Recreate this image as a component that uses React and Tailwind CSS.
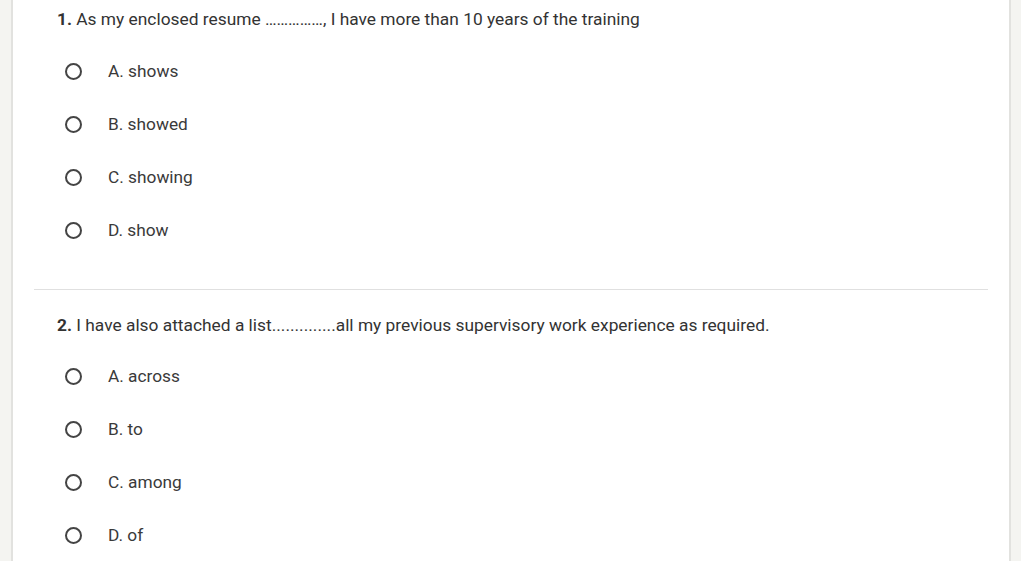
import React from "react";

const questions = [
  {
    n: "1.",
    text: "As my enclosed resume ……………, I have more than 10 years of the training",
    options: ["A. shows", "B. showed", "C. showing", "D. show"],
  },
  {
    n: "2.",
    text: "I have also attached a list..............all my previous supervisory work experience as required.",
    options: ["A. across", "B. to", "C. among", "D. of"],
  },
];

function Radio() {
  return (
    <span className="block shrink-0 w-[17px] h-[17px] rounded-full border-2 border-[#444444] box-border" />
  );
}

export default function App() {
  return (
    <div
      className="w-[1021px] h-[561px] overflow-hidden bg-[#f4f4f1] flex"
      style={{ fontFamily: "Roboto, 'Liberation Sans', sans-serif" }}
    >
      <div className="w-[11px] shrink-0" />
      <div className="w-[2px] shrink-0 bg-[#e2e2df]" />
      <div className="flex-1 bg-white h-full">
        <div className="px-[21px]">
          {questions.map((q, qi) => (
            <div
              key={qi}
              className={qi === 0 ? "border-b border-[#e0e0e0] pt-[7px] pb-[48px]" : "pt-[23px]"}
            >
              <div className="pl-[23px] text-[17.35px] leading-[24px] text-[#333333]">
                <span className="font-bold">{q.n}</span> {q.text}
              </div>
              <div className={(qi === 0 ? "pt-[29px]" : "pt-[28px]") + " pl-[31px] flex flex-col gap-[31px]"}>
                {q.options.map((o) => (
                  <div key={o} className="flex items-center h-[22px]">
                    <Radio />
                    <span className="ml-[26px] text-[17.3px] leading-[22px] text-[#3a3a3a]">{o}</span>
                  </div>
                ))}
              </div>
            </div>
          ))}
        </div>
      </div>
      <div className="w-[2px] shrink-0 bg-[#e2e2df]" />
      <div className="w-[10px] shrink-0" />
    </div>
  );
}
